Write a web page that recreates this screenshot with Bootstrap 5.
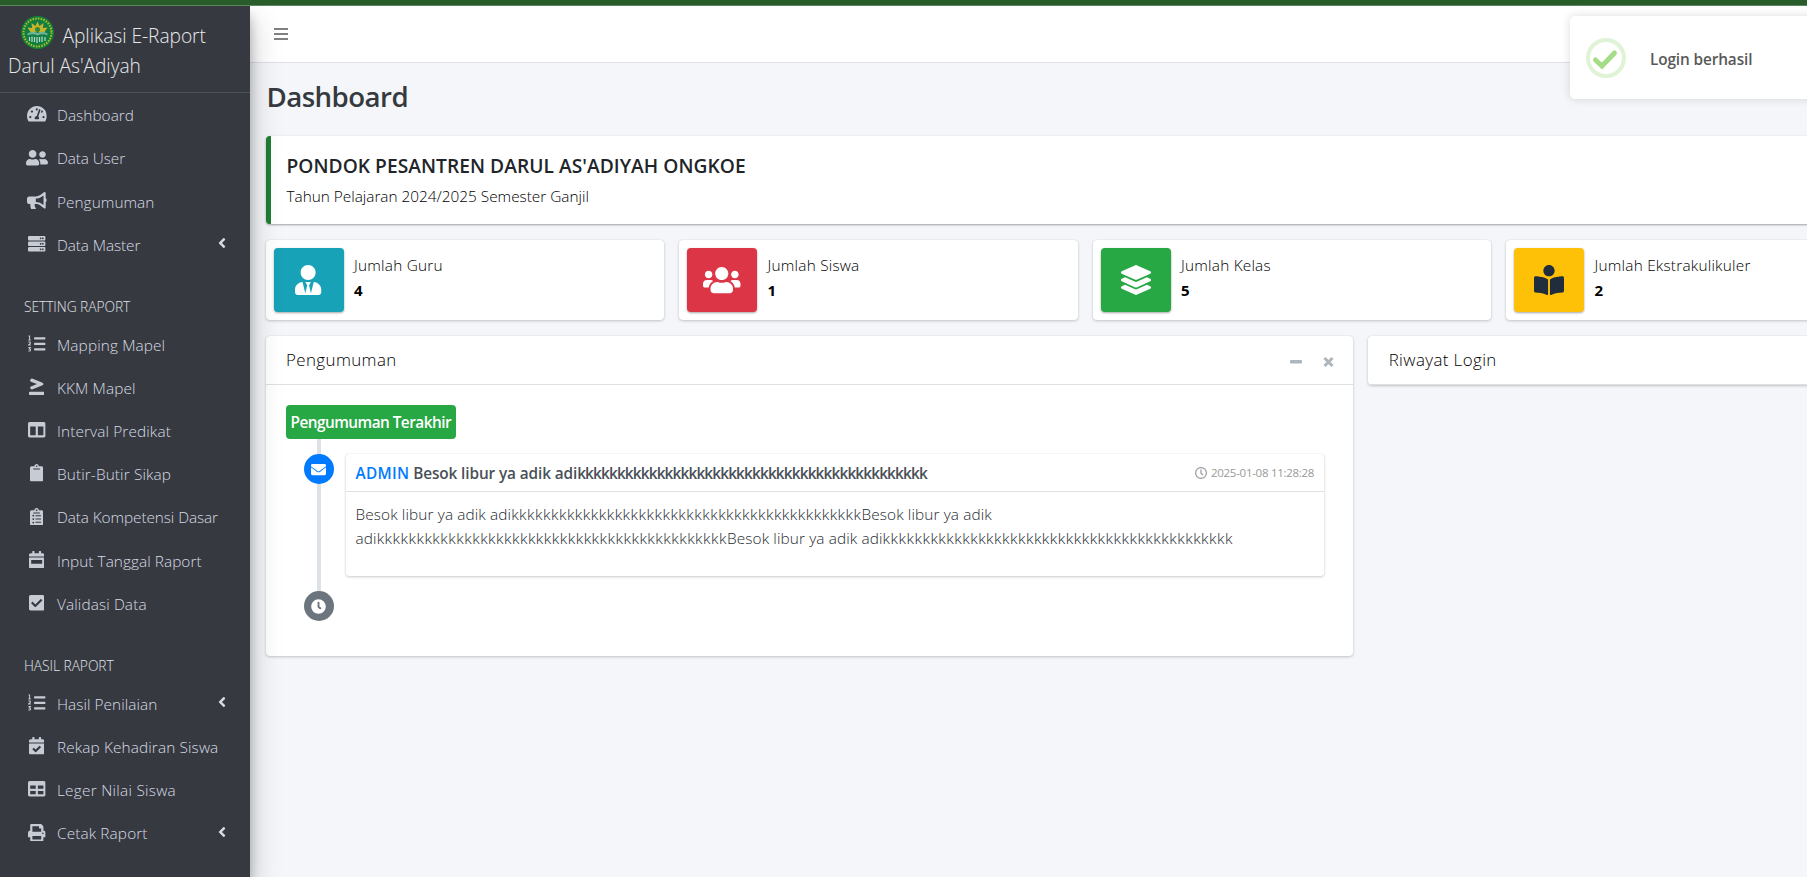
<!DOCTYPE html>
<html lang="id">
<head>
<meta charset="utf-8">
<meta name="viewport" content="width=device-width, initial-scale=1">
<title>Aplikasi E-Raport Darul As'Adiyah</title>
<link rel="stylesheet" href="https://cdn.jsdelivr.net/npm/bootstrap@5.3.0/dist/css/bootstrap.min.css">
<style>
  html, body { height: 100%; overflow: hidden; }
  body { font-family: "Open Sans", "Noto Sans", sans-serif; font-size: 15.36px; font-weight: 300; line-height: 24px; color: #000; background: #f4f6f9; letter-spacing: .05px; }
  svg { fill: currentColor; flex: none; }
  .top-strip { height: 6px; background: #285c2b; border-bottom: 1px solid #5d8660; }
  .app-shell { height: 871px; }

  /* sidebar */
  .side-panel { width: 250px; background: #363940; color: #d6dbe4; z-index: 5; box-shadow: 0 14px 28px rgba(0,0,0,.25), 0 10px 10px rgba(0,0,0,.22); clip-path: inset(0 -60px 0 0); }
  .brand { display: block; height: 87px; padding: 15px 8px 0; font-size: 19.2px; line-height: 30px; color: #e8e9eb; border-bottom: 1px solid #4b545c; text-decoration: none; letter-spacing: -.05px; }
  .brand svg { margin: -11px 8.5px 0 13px; vertical-align: middle; }
  .side-menu { padding: 2.2px 8px 0; }
  .side-link { display: flex; align-items: center; height: 40px; margin-bottom: 3.2px; padding: 2px 16px 0; color: #d6dbe4; text-decoration: none; white-space: nowrap; }
  .side-link .ico { width: 25.6px; margin-right: 7.4px; display: flex; justify-content: center; margin-top: -4px; color: #c6cbd4; }
  .side-link .ico svg { height: 17.6px; }
  .side-link .chev { margin: -5px 0 0 auto; height: 16px; width: 8px; }
  .side-head { padding: 27.7px 16px 7.5px; font-size: 13.8px; line-height: 21.6px; letter-spacing: -.06px; color: #e0e4ea; }
  .ls-a { letter-spacing: -.09px } .ls-b { letter-spacing: .12px } .ls-c { letter-spacing: .26px }

  /* main area: wider than the window, cut off at the right */
  .main-area { width: 1670px; flex: none; }
  .head-bar { height: 57px; background: #fff; border-bottom: 1px solid #dee2e6; padding-left: 24px; color: #808080; }
  .page-body { padding: 0 8px; }
  .page-title { font-size: 27.65px; font-weight: 600; line-height: 34px; letter-spacing: -.55px; color: #343a40; margin: 0; padding: 16px 8.5px 0; height: 73px; }
  .page-body .row { --bs-gutter-x: 15px; margin: 0; }
  .panel { background: #fff; border-radius: 4px; box-shadow: 0 0 1px rgba(0,0,0,.125), 0 1px 3px rgba(0,0,0,.2); }
  .school { margin: 0 7.5px 16px; height: 88px; padding: 16px 16px 0; border-left: 5px solid #1e7e34; box-shadow: 0 1px 3px rgba(0,0,0,.12), 0 1px 2px rgba(0,0,0,.24); }
  .school h5 { font-size: 19.2px; font-weight: 600; line-height: 24px; margin: 2px 0 7px; letter-spacing: .04px; color: #212529; }
  .school div { letter-spacing: -.01px; }
  .stat { height: 80px; padding: 8px; margin-bottom: 16px; }
  .stat-icon { width: 70px; border-radius: 4px; box-shadow: 0 1px 3px rgba(0,0,0,.12), 0 1px 2px rgba(0,0,0,.24); color: #fff; }
  .stat-text { padding: 6px 0 0 10.5px; letter-spacing: .22px; }
  .stat-text b { font-weight: 700; font-size: 15px; }
  .c-info { background: #17a2b8 } .c-red { background: #dc3545 } .c-green { background: #28a745 } .c-yellow { background: #ffc107; color: #1f2d3d }
  .panel-head { height: 49px; padding: 0 15px 0 20.5px; border-bottom: 1px solid #dfdfdf; font-size: 16.9px; letter-spacing: .4px; }
  .tool-btns { color: #adb5bd; gap: 21px; padding-right: 4px; margin-top: 4px; }

  /* timeline */
  .tl { position: relative; padding: 20px; height: 271px; }
  .tl::before { content: ""; position: absolute; left: 51px; top: 50px; height: 170px; width: 4px; background: #dee2e6; }
  .tl-label { position: relative; display: inline-block; height: 34px; line-height: 35px; padding: 0 5px; border-radius: 4px; background: #28a745; color: #fff; font-weight: 600; letter-spacing: -.53px; width: 170px; white-space: nowrap; }
  .tl-dot { width: 30px; height: 30px; border-radius: 50%; color: #fff; flex: none; position: relative; margin-left: 18px; }
  .tl-item { margin: 15px 9px 0 12px; height: 122px; border-radius: 3px; box-shadow: 0 0 1px rgba(0,0,0,.125), 0 1px 3px rgba(0,0,0,.2); color: #495057; }
  .tl-head { height: 38px; padding: 2px 10px 0; border-bottom: 1px solid #dfdfdf; }
  .tl-title { font-weight: 600; letter-spacing: -.11px; }
  .tl-title a { color: #007bff; text-decoration: none; letter-spacing: .3px; }
  .tl-title .kk { letter-spacing: -.85px; }
  .tl-time { font-size: 11.5px; color: #999; letter-spacing: -.28px; font-weight: 400; margin-top: -1px; }
  .tl-text { padding: 11px 10px; letter-spacing: .12px; color: #242a30; }
  .tl-text .kk { letter-spacing: .53px; }

  .notice { position: absolute; left: 1570px; top: 16px; width: 320px; height: 83px; border-radius: 5px; background: #fff; box-shadow: 0 0 10px rgba(0,0,0,.14); z-index: 9; padding-left: 16px; color: #595959; font-weight: 600; letter-spacing: -.12px; padding-top: 1px; }
</style>
<script src="https://cdn.jsdelivr.net/npm/bootstrap@5.3.0/dist/js/bootstrap.bundle.min.js"></script>
</head>
<body class="position-relative">
<svg class="d-none">
  <symbol id="tach" viewBox="0 0 576 512"><path d="M288 32C128.94 32 0 160.94 0 320c0 52.8 14.25 102.26 39.06 144.8 5.61 9.62 16.3 15.2 27.44 15.2h443c11.14 0 21.83-5.58 27.44-15.2C561.75 422.26 576 372.8 576 320c0-159.06-128.94-288-288-288zm0 64c14.71 0 26.58 10.13 30.32 23.65-1.11 2.26-2.64 4.23-3.45 6.67l-9.22 27.67c-5.13 3.49-10.97 6.01-17.64 6.01-17.67 0-32-14.33-32-32S270.33 96 288 96zM96 384c-17.67 0-32-14.33-32-32s14.33-32 32-32 32 14.33 32 32-14.33 32-32 32zm48-160c-17.67 0-32-14.33-32-32s14.33-32 32-32 32 14.33 32 32-14.33 32-32 32zm246.77-72.41l-61.33 184C343.13 347.33 352 364.54 352 384c0 11.72-3.38 22.55-8.88 32H232.88c-5.5-9.45-8.88-20.28-8.88-32 0-33.94 26.5-61.43 59.9-63.59l61.34-184.01c4.17-12.56 17.73-19.45 30.36-15.17 12.57 4.19 19.35 17.79 15.17 30.36zm14.66 57.2l15.52-46.55c3.47-1.29 7.13-2.23 11.05-2.23 17.67 0 32 14.33 32 32s-14.33 32-32 32c-11.38-.01-20.89-6.28-26.57-15.22zM480 384c-17.67 0-32-14.33-32-32s14.33-32 32-32 32 14.33 32 32-14.33 32-32 32z"/></symbol>
  <symbol id="friends" viewBox="0 0 640 512"><path d="M192 256c61.9 0 112-50.1 112-112S253.9 32 192 32 80 82.1 80 144s50.1 112 112 112zm76.8 32h-8.3c-20.8 10-43.9 16-68.5 16s-47.6-6-68.5-16h-8.3C51.6 288 0 339.6 0 403.2V432c0 26.5 21.5 48 48 48h288c26.5 0 48-21.5 48-48v-28.8c0-63.6-51.6-115.2-115.2-115.2zM480 256c53 0 96-43 96-96s-43-96-96-96-96 43-96 96 43 96 96 96zm48 32h-3.8c-13.9 4.8-28.6 8-44.2 8s-30.3-3.2-44.2-8H432c-20.4 0-39.2 5.9-55.7 15.4 24.4 26.3 39.7 61.2 39.7 99.8v38.4c0 2.2-.5 4.3-.6 6.4H592c26.5 0 48-21.5 48-48 0-61.9-50.1-112-112-112z"/></symbol>
  <symbol id="horn" viewBox="0 0 576 512"><path d="M576 240c0-23.63-12.95-44.04-32-55.12V32.01C544 23.26 537.02 0 512 0c-7.12 0-14.19 2.38-19.98 7.02l-85.03 68.03C364.28 109.19 310.66 128 256 128H64c-35.35 0-64 28.65-64 64v96c0 35.35 28.65 64 64 64h33.7c-1.39 10.48-2.18 21.14-2.18 32 0 39.77 9.26 77.35 25.56 110.94 5.19 10.69 16.52 17.06 28.4 17.06h74.28c26.05 0 41.69-29.84 25.9-50.56-16.4-21.52-26.15-48.36-26.15-77.44 0-11.11 1.62-21.79 4.41-32H256c54.66 0 108.28 18.81 150.98 52.95l85.03 68.03a32.023 32.023 0 0 0 19.98 7.02c24.92 0 32-22.78 32-32V295.13C563.05 284.04 576 263.63 576 240zm-96 141.42l-33.05-26.44C392.95 311.78 325.12 288 256 288v-96c69.12 0 136.95-23.78 190.95-66.98L480 98.58v282.84z"/></symbol>
  <symbol id="server" viewBox="0 0 512 512"><path fill-rule="evenodd" d="M32 32h448q32 0 32 32v64q0 32-32 32H32q-32 0-32-32V64q0-32 32-32zm0 160h448q32 0 32 32v64q0 32-32 32H32q-32 0-32-32v-64q0-32 32-32zm0 160h448q32 0 32 32v64q0 32-32 32H32q-32 0-32-32v-64q0-32 32-32zM432 72a24 24 0 1 0 .1 0zm-64 0a24 24 0 1 0 .1 0zm64 160a24 24 0 1 0 .1 0zm-64 0a24 24 0 1 0 .1 0zm64 160a24 24 0 1 0 .1 0zm-64 0a24 24 0 1 0 .1 0z"/></symbol>
  <symbol id="listol" viewBox="0 0 512 512"><path d="M192 64h304q16 0 16 16v32q0 16-16 16H192q-16 0-16-16V80q0-16 16-16zm0 160h304q16 0 16 16v32q0 16-16 16H192q-16 0-16-16v-32q0-16 16-16zm0 160h304q16 0 16 16v32q0 16-16 16H192q-16 0-16-16v-32q0-16 16-16z"/><path fill="none" stroke="currentColor" stroke-width="30" d="M16 30h30v112M12 146h70M12 206q62-12 58 22-2 18-52 62h66M14 367h56l-30 38q36 2 36 32-2 42-64 28"/></symbol>
  <symbol id="gte" viewBox="0 0 448 512"><path d="M55.22 107.69l175.56 68.09-175.44 68.05c-18.39 6.03-27.88 24.39-21.2 41l12.09 30.08c6.68 16.61 26.99 25.19 45.38 19.15L393.02 214.2c13.77-4.52 22.98-16.61 22.98-30.17v-15.96c0-13.56-9.21-25.65-22.98-30.17L91.3 17.92c-18.29-6-38.51 2.53-45.15 19.06L34.12 66.9c-6.64 16.53 2.81 34.79 21.1 40.79zM424 400H24c-13.25 0-24 10.74-24 24v48c0 13.25 10.75 24 24 24h400c13.25 0 24-10.75 24-24v-48c0-13.26-10.75-24-24-24z"/></symbol>
  <symbol id="cols" viewBox="0 0 512 512"><path d="M464 32H48C21.49 32 0 53.49 0 80v352c0 26.51 21.49 48 48 48h416c26.51 0 48-21.49 48-48V80c0-26.51-21.49-48-48-48zM224 416H64V160h160v256zm224 0H288V160h160v256z"/></symbol>
  <symbol id="clip" viewBox="0 0 384 512"><path d="M384 112v352c0 26.51-21.49 48-48 48H48c-26.51 0-48-21.49-48-48V112c0-26.51 21.49-48 48-48h80c0-35.29 28.71-64 64-64s64 28.71 64 64h80c26.51 0 48 21.49 48 48zM192 40c-13.255 0-24 10.745-24 24s10.745 24 24 24 24-10.745 24-24-10.745-24-24-24m96 114v-20a6 6 0 0 0-6-6H102a6 6 0 0 0-6 6v20a6 6 0 0 0 6 6h180a6 6 0 0 0 6-6z"/></symbol>
  <symbol id="cliplist" viewBox="0 0 384 512"><path fill-rule="evenodd" d="M336 64h-80c0-35.3-28.7-64-64-64s-64 28.7-64 64H48C21.5 64 0 85.5 0 112v352c0 26.5 21.5 48 48 48h288c26.5 0 48-21.5 48-48V112c0-26.5-21.5-48-48-48zM96 400a24 24 0 1 0 .1 0zM96 296a24 24 0 1 0 .1 0zM96 200a24 24 0 1 0 .1 0zM192 40a24 24 0 1 0 .1 0zM104 128h176q8 0 8 8v16q0 8-8 8H104q-8 0-8-8v-16q0-8 8-8zM160 208h160v32H160zM160 304h160v32H160zM160 400h160v32H160z"/></symbol>
  <symbol id="cal" viewBox="0 0 448 512"><path fill-rule="evenodd" d="M436 160H12q-12 0-12-12v-36q0-48 48-48h48V12q0-12 12-12h40q12 0 12 12v52h128V12q0-12 12-12h40q12 0 12 12v52h48q48 0 48 48v36q0 12-12 12zM12 192h424q12 0 12 12v260q0 48-48 48H48q-48 0-48-48V204q0-12 12-12zM64 260v108h320V260z"/></symbol>
  <symbol id="calcheck" viewBox="0 0 448 512"><path fill-rule="evenodd" d="M436 160H12q-12 0-12-12v-36q0-48 48-48h48V12q0-12 12-12h40q12 0 12 12v52h128V12q0-12 12-12h40q12 0 12 12v52h48q48 0 48 48v36q0 12-12 12zM12 192h424q12 0 12 12v260q0 48-48 48H48q-48 0-48-48V204q0-12 12-12zm333.3 95.9l-28.2-28.4c-4.7-4.7-12.3-4.7-17 0L194.1 364.7l-46-46.4c-4.7-4.7-12.3-4.7-17 0l-28.4 28.2c-4.7 4.7-4.7 12.3 0 17l82.6 83.3c4.7 4.7 12.3 4.7 17 0l143-141.8c4.7-4.7 4.7-12.3 0-17z"/></symbol>
  <symbol id="check" viewBox="0 0 448 512"><path d="M400 480H48c-26.51 0-48-21.49-48-48V80c0-26.51 21.49-48 48-48h352c26.51 0 48 21.49 48 48v352c0 26.51-21.49 48-48 48zm-204.686-98.059l184-184c6.248-6.248 6.248-16.379 0-22.627l-22.627-22.627c-6.248-6.248-16.379-6.249-22.628 0L184 302.745l-70.059-70.059c-6.248-6.248-16.379-6.248-22.628 0l-22.627 22.627c-6.248 6.248-6.248 16.379 0 22.627l104 104c6.249 6.25 16.379 6.25 22.628.001z"/></symbol>
  <symbol id="tbl" viewBox="0 0 512 512"><path d="M464 32H48C21.49 32 0 53.49 0 80v352c0 26.51 21.49 48 48 48h416c26.51 0 48-21.49 48-48V80c0-26.51-21.49-48-48-48zM224 416H64v-96h160v96zm0-160H64v-96h160v96zm224 160H288v-96h160v96zm0-160H288v-96h160v96z"/></symbol>
  <symbol id="print" viewBox="0 0 512 512"><path d="M448 192V77.25c0-8.49-3.37-16.62-9.37-22.63L393.37 9.37c-6-6-14.14-9.37-22.63-9.37H96C78.33 0 64 14.33 64 32v160c-35.35 0-64 28.65-64 64v112c0 8.84 7.16 16 16 16h48v96c0 17.67 14.33 32 32 32h320c17.67 0 32-14.33 32-32v-96h48c8.84 0 16-7.16 16-16V256c0-35.35-28.65-64-64-64zm-64 256H128v-96h256v96zm0-224H128V64h192v48c0 8.84 7.16 16 16 16h48v96zm48 72c-13.25 0-24-10.75-24-24 0-13.26 10.75-24 24-24s24 10.74 24 24c0 13.25-10.75 24-24 24z"/></symbol>
  <symbol id="left" viewBox="0 0 256 512"><path d="M31.7 239l136-136c9.4-9.4 24.6-9.4 33.9 0l22.6 22.6c9.4 9.4 9.4 24.6 0 33.9L127.9 256l96.4 96.4c9.4 9.4 9.4 24.6 0 33.9L201.7 409c-9.4 9.4-24.6 9.4-33.9 0l-136-136c-9.5-9.4-9.5-24.6-.1-34z"/></symbol>
</svg>

<div class="top-strip"></div>
<div class="app-shell d-flex overflow-hidden">
  <aside class="side-panel flex-shrink-0 position-relative">
    <a class="brand" href="#"><svg width="33" height="33" viewBox="0 0 66 66"><circle cx="33" cy="33" r="33" fill="#11813a"/><circle cx="33" cy="33" r="28" fill="none" stroke="#b9bb2c" stroke-width="4" stroke-dasharray="3 2.5"/><circle cx="33" cy="33" r="23.5" fill="#0f7d45"/><path d="M33 11l4 9 8-6-1 10 9-1-6 9H19l-6-9 9 1-1-10 8 6z" fill="#c9b32a"/><circle cx="33" cy="27" r="5" fill="#2d8a3a"/><path d="M13 35q10-6 20-1 10-5 20 1v4q-10-5-20 0-10-5-20 0z" fill="#6fb594"/><path d="M17 42v8M22 41v11M27 42v10M32 42v12M37 42v10M42 41v11M48 42v8" stroke="#b5d8c5" stroke-width="2.500"/></svg>Aplikasi E-Raport<br>Darul As'Adiyah</a>
    <nav class="side-menu">
      <a class="side-link" href="#"><span class="ico"><svg width="19.8"><use href="#tach"/></svg></span>Dashboard</a>
      <a class="side-link ls-a" href="#"><span class="ico"><svg width="22"><use href="#friends"/></svg></span>Data User</a>
      <a class="side-link" href="#"><span class="ico"><svg width="19.8"><use href="#horn"/></svg></span>Pengumuman</a>
      <a class="side-link ls-a" href="#"><span class="ico"><svg width="17.6"><use href="#server"/></svg></span>Data Master<svg class="chev"><use href="#left"/></svg></a>
      <div class="side-head">SETTING RAPORT</div>
      <a class="side-link ls-b" href="#"><span class="ico"><svg width="17.6"><use href="#listol"/></svg></span>Mapping Mapel</a>
      <a class="side-link ls-b" href="#"><span class="ico"><svg width="15.4"><use href="#gte"/></svg></span>KKM Mapel</a>
      <a class="side-link ls-b" href="#"><span class="ico"><svg width="17.6"><use href="#cols"/></svg></span>Interval Predikat</a>
      <a class="side-link ls-b" href="#"><span class="ico"><svg width="13.2"><use href="#clip"/></svg></span>Butir-Butir Sikap</a>
      <a class="side-link ls-a" href="#"><span class="ico"><svg width="13.2"><use href="#cliplist"/></svg></span>Data Kompetensi Dasar</a>
      <a class="side-link" href="#"><span class="ico"><svg width="15.4"><use href="#cal"/></svg></span>Input Tanggal Raport</a>
      <a class="side-link ls-b" href="#"><span class="ico"><svg width="15.4"><use href="#check"/></svg></span>Validasi Data</a>
      <div class="side-head">HASIL RAPORT</div>
      <a class="side-link" href="#"><span class="ico"><svg width="17.6"><use href="#listol"/></svg></span>Hasil Penilaian<svg class="chev"><use href="#left"/></svg></a>
      <a class="side-link ls-b" href="#"><span class="ico"><svg width="15.4"><use href="#calcheck"/></svg></span>Rekap Kehadiran Siswa</a>
      <a class="side-link ls-c" href="#"><span class="ico"><svg width="17.6"><use href="#tbl"/></svg></span>Leger Nilai Siswa</a>
      <a class="side-link ls-b" href="#"><span class="ico"><svg width="17.6"><use href="#print"/></svg></span>Cetak Raport<svg class="chev"><use href="#left"/></svg></a>
    </nav>
  </aside>

  <main class="main-area">
    <header class="head-bar d-flex align-items-center"><svg width="14" height="12" viewBox="0 0 14 12"><path d="M0 0h14v2H0zM0 5h14v2H0zM0 10h14v2H0z"/></svg></header>
    <div class="page-body">
      <h1 class="page-title">Dashboard</h1>
      <section class="panel school"><h5>PONDOK PESANTREN DARUL AS'ADIYAH ONGKOE</h5><div>Tahun Pelajaran 2024/2025 Semester Ganjil</div></section>

      <div class="row">
        <div class="col-3"><div class="panel stat d-flex"><div class="stat-icon c-info d-flex align-items-center justify-content-center"><svg width="26.25" height="30" viewBox="0 0 448 512"><path d="M224 256c70.7 0 128-57.3 128-128S294.7 0 224 0 96 57.3 96 128s57.3 128 128 128zm95.8 32.6L272 480l-32-136 32-56h-96l32 56-32 136-47.8-191.4C56.9 292 0 350.3 0 422.4V464c0 26.5 21.5 48 48 48h352c26.5 0 48-21.5 48-48v-41.6c0-72.1-56.9-130.4-128.2-133.8z"/></svg></div><div class="stat-text">Jumlah Guru<br><b>4</b></div></div></div>
        <div class="col-3"><div class="panel stat d-flex"><div class="stat-icon c-red d-flex align-items-center justify-content-center"><svg width="37.5" height="30" viewBox="0 0 640 512"><path d="M96 224c35.3 0 64-28.7 64-64s-28.7-64-64-64-64 28.7-64 64 28.7 64 64 64zm448 0c35.3 0 64-28.7 64-64s-28.7-64-64-64-64 28.7-64 64 28.7 64 64 64zm32 32h-64c-17.6 0-33.5 7.1-45.1 18.6 40.3 22.1 68.9 62 75.1 109.4h66c17.7 0 32-14.3 32-32v-32c0-35.3-28.7-64-64-64zm-256 0c61.9 0 112-50.1 112-112S381.9 32 320 32 208 82.1 208 144s50.1 112 112 112zm76.8 32h-8.3c-20.8 10-43.9 16-68.5 16s-47.6-6-68.5-16h-8.3C179.6 288 128 339.6 128 403.2V432c0 26.5 21.5 48 48 48h288c26.5 0 48-21.5 48-48v-28.8c0-63.6-51.6-115.2-115.2-115.2zm-223.7-13.4C161.5 263.1 145.6 256 128 256H64c-35.3 0-64 28.7-64 64v32c0 17.7 14.3 32 32 32h65.9c6.3-47.4 34.9-87.3 75.2-109.4z"/></svg></div><div class="stat-text">Jumlah Siswa<br><b>1</b></div></div></div>
        <div class="col-3"><div class="panel stat d-flex"><div class="stat-icon c-green d-flex align-items-center justify-content-center"><svg width="30" height="30" viewBox="0 0 512 512"><path d="M12.41 148.02l232.94 105.67c6.8 3.09 14.49 3.09 21.29 0l232.94-105.67c16.55-7.51 16.55-32.52 0-40.03L266.65 2.31a25.607 25.607 0 0 0-21.29 0L12.41 107.98c-16.55 7.51-16.55 32.53 0 40.04zm487.18 88.28l-58.09-26.33-161.64 73.27c-7.56 3.43-15.59 5.17-23.86 5.17s-16.29-1.74-23.86-5.17L70.51 209.97l-58.1 26.33c-16.55 7.5-16.55 32.5 0 40l232.94 105.59c6.8 3.08 14.49 3.08 21.29 0L499.59 276.3c16.55-7.5 16.55-32.5 0-40zm0 127.8l-57.87-26.23-161.86 73.37c-7.56 3.43-15.59 5.17-23.86 5.17s-16.29-1.74-23.86-5.17L70.29 337.87 12.41 364.1c-16.55 7.5-16.55 32.5 0 40l232.94 105.59c6.8 3.08 14.49 3.08 21.29 0L499.59 404.1c16.55-7.5 16.55-32.5 0-40z"/></svg></div><div class="stat-text">Jumlah Kelas<br><b>5</b></div></div></div>
        <div class="col-3"><div class="panel stat d-flex"><div class="stat-icon c-yellow d-flex align-items-center justify-content-center"><svg width="30" height="30" viewBox="0 0 512 512"><path d="M352 96c0-53.02-42.98-96-96-96s-96 42.98-96 96 42.98 96 96 96 96-42.98 96-96zM233.59 241.1c-59.33-36.32-155.43-46.3-203.79-49.05C13.55 191.13 0 203.51 0 219.14v222.8c0 14.33 11.59 26.28 26.49 27.05 43.66 2.29 131.99 10.68 193.04 41.43 9.37 4.72 20.48-1.71 20.48-11.87V252.56c-.01-4.67-2.32-8.95-6.42-11.46zm248.61-49.05c-48.35 2.74-144.46 12.73-203.78 49.05-4.1 2.51-6.41 6.96-6.41 11.63v245.79c0 10.19 11.14 16.63 20.54 11.9 61.04-30.72 149.32-39.11 192.97-41.4 14.9-.78 26.49-12.73 26.49-27.06V219.14c-.01-15.63-13.56-28.01-29.81-27.09z"/></svg></div><div class="stat-text">Jumlah Ekstrakulikuler<br><b>2</b></div></div></div>
      </div>

      <div class="row">
        <div class="col-8">
          <section class="panel">
            <div class="panel-head d-flex align-items-center justify-content-between">Pengumuman
              <div class="tool-btns d-flex align-items-center"><svg width="12" height="12" viewBox="0 0 12 12"><rect y="4" width="12" height="3.5" rx="1"/></svg><svg width="11" height="12" viewBox="0 0 11 12"><path d="M1.500 2l8 8M9.500 2l-8 8" stroke="currentColor" stroke-width="3"/></svg></div>
            </div>
            <div class="tl">
              <div class="tl-label">Pengumuman Terakhir</div>
              <div class="d-flex">
                <div class="tl-dot d-flex align-items-center justify-content-center" style="margin-top:15px;background:#007bff"><svg width="15" height="15" viewBox="0 0 512 512"><path d="M502.3 190.8c3.9-3.1 9.7-.2 9.7 4.7V400c0 26.5-21.5 48-48 48H48c-26.5 0-48-21.5-48-48V195.6c0-5 5.7-7.8 9.7-4.7 22.4 17.4 52.1 39.5 154.1 113.6 21.1 15.4 56.7 47.8 92.2 47.6 35.7.3 72-32.8 92.3-47.6 102-74.1 131.6-96.3 154-113.7zM256 320c23.2.4 56.6-29.2 73.4-41.4 132.7-96.3 142.8-104.7 173.4-128.7 5.8-4.5 9.2-11.5 9.2-18.9v-19c0-26.5-21.5-48-48-48H48c-26.5 0-48 21.5-48 48v19c0 7.4 3.4 14.3 9.2 18.9 30.6 23.9 40.7 32.4 173.4 128.7 16.8 12.2 50.2 41.8 73.4 41.4z"/></svg></div>
                <div class="tl-item flex-grow-1">
                  <div class="tl-head d-flex align-items-center justify-content-between">
                    <div class="tl-title"><a href="#">ADMIN</a> Besok libur ya adik adi<span class="kk">kkkkkkkkkkkkkkkkkkkkkkkkkkkkkkkkkkkkkkkkkkkk</span></div>
                    <div class="tl-time d-flex align-items-center"><svg class="me-1" width="12" height="12" viewBox="0 0 12 12"><circle cx="6" cy="6" r="5.4" fill="none" stroke="currentColor" stroke-width="1.2"/><path d="M6 2.500v3.800l2 1.700" fill="none" stroke="currentColor" stroke-width="1.2"/></svg>2025-01-08 11:28:28</div>
                  </div>
                  <div class="tl-text">Besok libur ya adik adi<span class="kk">kkkkkkkkkkkkkkkkkkkkkkkkkkkkkkkkkkkkkkkkkkkk</span>Besok libur ya adik adi<span class="kk">kkkkkkkkkkkkkkkkkkkkkkkkkkkkkkkkkkkkkkkkkkkk</span>Besok libur ya adik adi<span class="kk">kkkkkkkkkkkkkkkkkkkkkkkkkkkkkkkkkkkkkkkkkkkk</span></div>
                </div>
              </div>
              <div class="tl-dot d-flex align-items-center justify-content-center" style="margin-top:15px;background:#6c757d"><svg width="15" height="15" viewBox="0 0 512 512"><path d="M256 8C119 8 8 119 8 256s111 248 248 248 248-111 248-248S393 8 256 8zm92.490 313l-20 25a16 16 0 0 1-22.490 2.500l-67-49.720a40 40 0 0 1-15-31.230V112a16 16 0 0 1 16-16h32a16 16 0 0 1 16 16v144l58 42.500a16 16 0 0 1 2.490 22.500z"/></svg></div>
            </div>
          </section>
        </div>
        <div class="col-4"><section class="panel"><div class="panel-head d-flex align-items-center">Riwayat Login</div></section></div>
      </div>
    </div>
  </main>
</div>

<div class="notice d-flex align-items-center"><svg width="40" height="40" viewBox="0 0 40 40"><circle cx="20" cy="20" r="18" fill="none" stroke="#e1f3d7" stroke-width="4"/><path d="M9.500 22l6.500 6L28.500 15" fill="none" stroke="#a5dc86" stroke-width="5" stroke-linecap="round"/></svg><span class="ms-4 pt-1">Login berhasil</span></div>
</body>
</html>
